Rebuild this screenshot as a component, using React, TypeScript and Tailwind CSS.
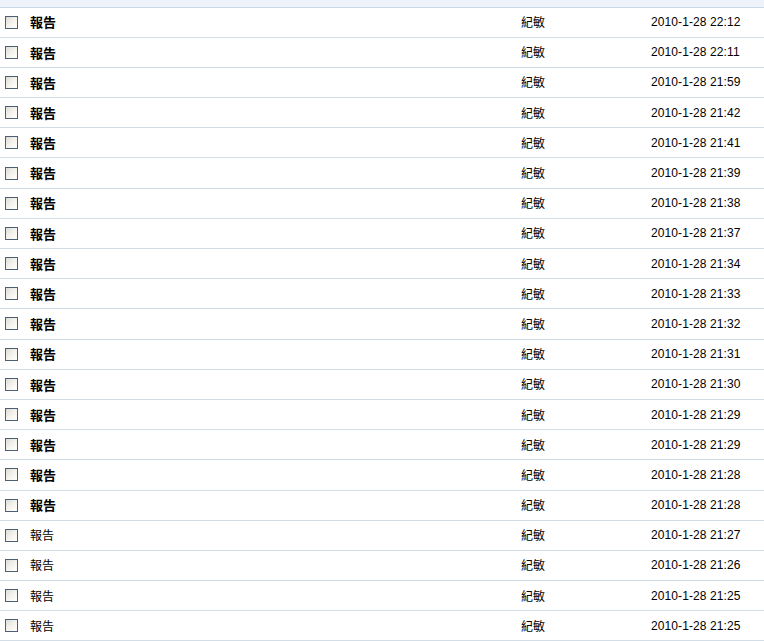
import React from 'react'

// 收件列表 — 主旨 / 寄件人 / 時間
const rows: { subject: string; from: string; time: string; unread: boolean }[] = [
  { subject: '報告', from: '紀敏', time: '2010-1-28 22:12', unread: true },
  { subject: '報告', from: '紀敏', time: '2010-1-28 22:11', unread: true },
  { subject: '報告', from: '紀敏', time: '2010-1-28 21:59', unread: true },
  { subject: '報告', from: '紀敏', time: '2010-1-28 21:42', unread: true },
  { subject: '報告', from: '紀敏', time: '2010-1-28 21:41', unread: true },
  { subject: '報告', from: '紀敏', time: '2010-1-28 21:39', unread: true },
  { subject: '報告', from: '紀敏', time: '2010-1-28 21:38', unread: true },
  { subject: '報告', from: '紀敏', time: '2010-1-28 21:37', unread: true },
  { subject: '報告', from: '紀敏', time: '2010-1-28 21:34', unread: true },
  { subject: '報告', from: '紀敏', time: '2010-1-28 21:33', unread: true },
  { subject: '報告', from: '紀敏', time: '2010-1-28 21:32', unread: true },
  { subject: '報告', from: '紀敏', time: '2010-1-28 21:31', unread: true },
  { subject: '報告', from: '紀敏', time: '2010-1-28 21:30', unread: true },
  { subject: '報告', from: '紀敏', time: '2010-1-28 21:29', unread: true },
  { subject: '報告', from: '紀敏', time: '2010-1-28 21:29', unread: true },
  { subject: '報告', from: '紀敏', time: '2010-1-28 21:28', unread: true },
  { subject: '報告', from: '紀敏', time: '2010-1-28 21:28', unread: true },
  { subject: '報告', from: '紀敏', time: '2010-1-28 21:27', unread: false },
  { subject: '報告', from: '紀敏', time: '2010-1-28 21:26', unread: false },
  { subject: '報告', from: '紀敏', time: '2010-1-28 21:25', unread: false },
  { subject: '報告', from: '紀敏', time: '2010-1-28 21:25', unread: false },
]

function Check() {
  return (
    <span className="block h-[13px] w-[13px] shrink-0 border border-[#4d6072] bg-gradient-to-br from-[#dcdcd6] via-[#f4f2ec] to-[#ffffff]" />
  )
}

export default function App() {
  return (
    <div className="h-[641px] w-[764px] overflow-hidden bg-white font-['Liberation_Sans','Noto_Sans_CJK_TC',sans-serif] text-[12px] text-black">
      {/* 上方表頭邊 */}
      <div className="box-border h-[7.5px] border-b border-[#c9d7e8] bg-[#eef3fa]" />
      {rows.map((r, i) => (
        <div key={i} className="box-border flex h-[30.2px] items-center border-b border-[#d3dde6]">
          <div className="w-[30px] shrink-0 pl-[5px]">
            <Check />
          </div>
          <div className="w-[491px] shrink-0 font-['Noto_Sans_CJK_TC',sans-serif]">
            {r.unread ? <span className="text-[13px] font-bold">{r.subject}</span> : r.subject}
          </div>
          <div className="w-[130px] shrink-0 font-['Noto_Sans_CJK_TC',sans-serif]">{r.from}</div>
          <div className="text-[12px] tracking-[0.1px]">{r.time}</div>
        </div>
      ))}
    </div>
  )
}
